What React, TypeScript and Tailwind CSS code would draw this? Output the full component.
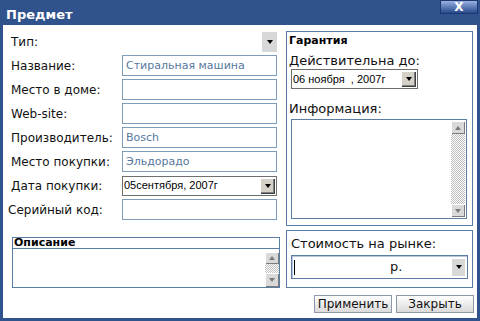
import type { ReactNode } from 'react';

// Small helpers for the old-school Windows form controls in the dialog.

function TriDown({ color = 'border-t-black' }: { color?: string }) {
  return <span className={'h-0 w-0 border-x-[3px] border-t-[4px] border-x-transparent ' + color} />;
}

function TriUp() {
  return <span className="h-0 w-0 border-x-[3px] border-b-[4px] border-x-transparent border-b-[#7a7a7a]" />;
}

// Scrollbar of a disabled textarea: grey buttons with a dithered track.
function ScrollBar({ up, down }: { up: string; down: string }) {
  return (
    <div className="flex w-[14px] shrink-0 flex-col">
      <div
        className={
          'flex items-center justify-center bg-[#d9d9d9] shadow-[inset_1px_1px_#ffffff,inset_-1px_-1px_#7c7c7c] ' + up
        }
      >
        <TriUp />
      </div>
      <div className="flex-1 bg-[repeating-conic-gradient(#bdbdbd_0%_25%,#ffffff_0%_50%)] bg-[length:2px_2px]" />
      <div
        className={
          'flex items-center justify-center bg-[#d9d9d9] shadow-[inset_1px_1px_#ffffff,inset_-1px_-1px_#7c7c7c] ' + down
        }
      >
        <TriDown color="border-t-[#7a7a7a]" />
      </div>
    </div>
  );
}

function ClassicArrow() {
  return (
    <div className="flex h-[16px] w-[15px] items-center justify-center bg-[#d4d0c8] shadow-[inset_1px_1px_#ffffff,inset_-1px_-1px_#404040,inset_-2px_-2px_#808080]">
      <TriDown />
    </div>
  );
}

function Row({ label, children }: { label: string; children?: ReactNode }) {
  return (
    <div className="flex h-[21px] items-center">
      <span className="w-[111px] shrink-0 text-[12px] text-[#111]">{label}</span>
      {children}
    </div>
  );
}

function TextInput({ value = '' }: { value?: string }) {
  return (
    <div className="h-[21px] w-[155px] border border-[#7f9db9] pl-[3px] text-[11px] leading-[19px] text-[#56789e]">
      {value}
    </div>
  );
}

function Button({ children }: { children: ReactNode }) {
  return (
    <button
      type="button"
      className="h-[18px] w-[78px] border border-[#8e98a8] bg-gradient-to-b from-[#ffffff] to-[#dadada] text-[12px] leading-[16px] text-[#111]"
    >
      {children}
    </button>
  );
}

export default function App() {
  return (
    <div className="flex h-[321px] w-[480px] flex-col bg-[#31538d] font-['DejaVu_Sans',Verdana,sans-serif]">
      <div className="flex h-[25px] shrink-0 items-start justify-between">
        <span className="pl-[6px] pt-[7px] text-[13px] font-bold leading-[16px] text-white">Предмет</span>
        <button
          type="button"
          className="mr-[2px] flex h-[14px] w-[38px] items-center justify-center border border-[#1c386e] bg-gradient-to-b from-[#9ab2e2] to-[#27498c] text-[12px] font-bold leading-none text-white"
        >
          X
        </button>
      </div>

      <div className="mx-[3px] mb-[3px] flex flex-1 bg-white">
        {/* left column: item fields */}
        <div className="flex w-[282px] shrink-0 flex-col pl-[8px] pr-[8px] pt-[6px]">
          <div className="flex flex-col gap-[3px]">
            <div className="flex h-[21px] items-center justify-between">
              <span className="text-[12px] text-[#111]">Тип:</span>
              <div className="flex h-[20px] w-[15px] items-center justify-center bg-[#d8d8d8]">
                <TriDown />
              </div>
            </div>
            <Row label="Название:">
              <TextInput value="Стиральная машина" />
            </Row>
            <Row label="Место в доме:">
              <TextInput />
            </Row>
            <Row label="Web-site:">
              <TextInput />
            </Row>
            <Row label="Производитель:">
              <TextInput value="Bosch" />
            </Row>
            <Row label="Место покупки:">
              <TextInput value="Эльдорадо" />
            </Row>
            <Row label="Дата покупки:">
              <div className="flex h-[20px] w-[155px] items-center justify-between border border-[#6f6f6f] pl-[1px] pr-[1px]">
                <span className="font-['Liberation_Sans',Arial,sans-serif] text-[11px] text-black">
                  05сентября, 2007г
                </span>
                <ClassicArrow />
              </div>
            </Row>
            <div className="flex h-[21px] items-center">
              <span className="-ml-[3px] w-[114px] shrink-0 text-[12px] text-[#111]">Серийный код:</span>
              <TextInput />
            </div>
          </div>

          <div className="ml-[1px] mt-[17px] flex h-[51px] w-[268px] flex-col border border-[#5b7ca3]">
            <div className="h-[11px] border-b border-[#5b7ca3] pl-[1px] text-[11px] font-bold leading-[10px] text-black">
              Описание
            </div>
            <div className="flex flex-1 justify-end pt-[3px]">
              <ScrollBar up="h-[12px]" down="h-[14px]" />
            </div>
          </div>
        </div>

        {/* right column: warranty, price, actions */}
        <div className="flex w-[189px] shrink-0 flex-col pt-[6px]">
          <div className="ml-[1px] flex h-[195px] w-[187px] flex-col border border-[#5b7ca3] pb-[6px]">
            <div className="pl-[2px] pt-[2px] text-[11px] font-bold leading-[14px] text-black">Гарантия</div>
            <div className="mt-[5px] pl-[2px] text-[13px] leading-[15px] text-[#111]">Действительна до:</div>
            <div className="ml-[4px] mt-[1px] flex h-[20px] w-[127px] items-center justify-between border border-[#6f6f6f] pl-[1px] pr-[1px]">
              <span className="whitespace-pre font-['Liberation_Sans',Arial,sans-serif] text-[11px] text-black">
                06 ноября  , 2007г
              </span>
              <ClassicArrow />
            </div>
            <div className="mt-[12px] pl-[2px] text-[13px] leading-[15px] text-[#111]">Информация:</div>
            <div className="ml-[4px] mt-[3px] flex w-[176px] flex-1 justify-end border border-[#5b7ca3] p-[1px]">
              <ScrollBar up="h-[13px]" down="h-[13px]" />
            </div>
          </div>

          <div className="ml-[1px] mt-[4px] flex h-[58px] w-[187px] flex-col border border-[#5b7ca3] pt-[5px]">
            <div className="pl-[4px] text-[13px] leading-[15px] text-[#111]">Стоимость на рынке:</div>
            <div className="ml-[4px] mt-[4px] flex h-[24px] w-[177px] items-center border border-[#5b7ca3] shadow-[inset_1px_1px_#b8c8da] pl-[2px] pr-[2px]">
              <span className="h-[15px] w-px bg-black" />
              <span className="ml-[95px] text-[13px] text-[#111]">р.</span>
              <div className="ml-auto flex h-[17px] w-[13px] items-center justify-center bg-[#d8d8d8]">
                <TriDown />
              </div>
            </div>
          </div>

          <div className="mt-[7px] flex justify-end gap-[4px]">
            <Button>Применить</Button>
            <Button>Закрыть</Button>
          </div>
        </div>
      </div>
    </div>
  );
}
